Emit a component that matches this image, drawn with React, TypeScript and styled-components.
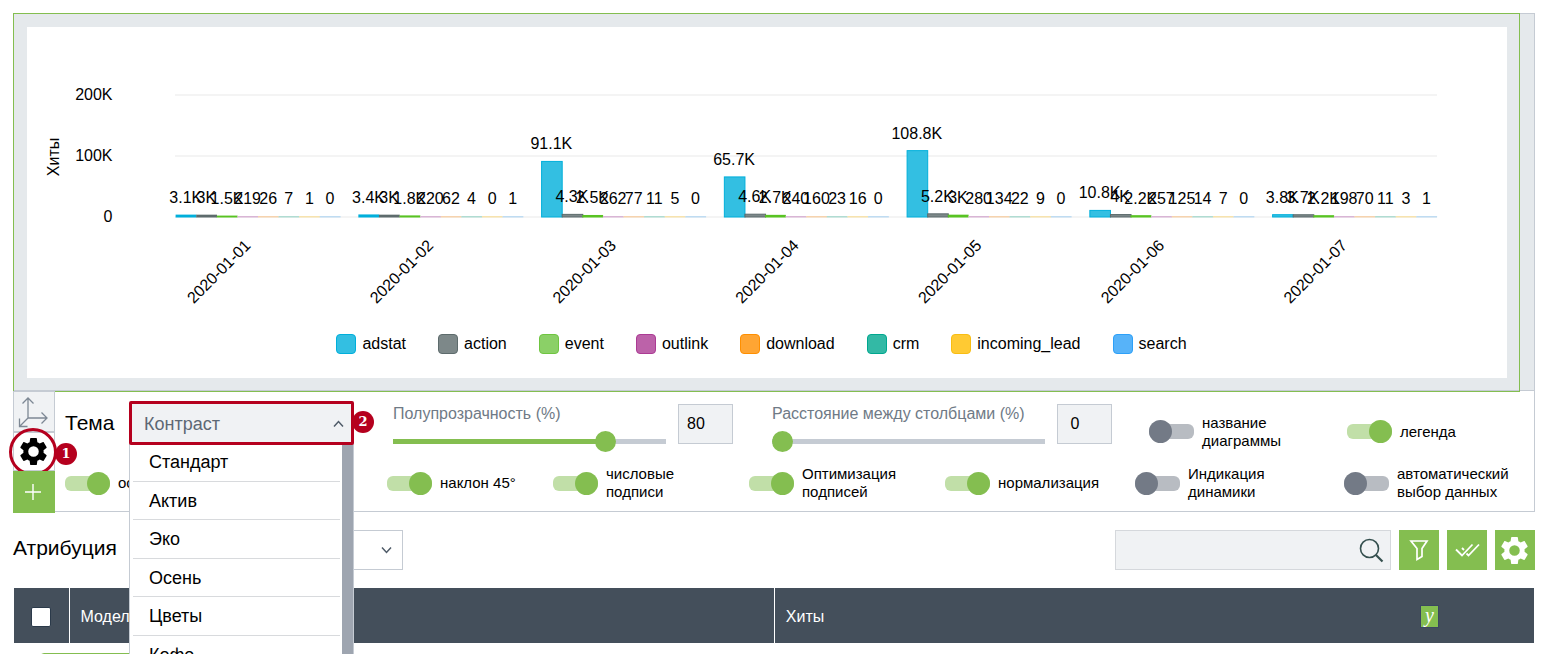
import React, { useState } from 'react';
import styled, { createGlobalStyle } from 'styled-components';

const green = '#84be50';
const line = '#c5cbd3';
const field = '#f0f2f4';
const red = '#b5001e';
const slate = '#444f5b';

const Global = createGlobalStyle`
  *, *::before, *::after { box-sizing: border-box; }
  body { margin: 0; background: #fff; color: #000; }
  body, button, input, select { font-family: "Liberation Sans", Arial, sans-serif; font-size: 16px; }
  button { cursor: pointer; }
`;

const Page = styled.main`
  height: 100vh;
  overflow: hidden;
  padding: 13px 12px 0 13px;
`;

/* Chart */
const ChartArea = styled.section`
  background: #e5e9ec;
  padding: 0 14px 0 0;
  border: solid ${line};
  border-width: 1px 1px 1px 0;
`;
const ChartFrame = styled.div`
  position: relative;
  margin: -1px 0 -2px;
  padding: 13px 12px 13px 13px;
  border: 1px solid ${green};
`;
const ChartCard = styled.div`
  background: #fff;
  padding-bottom: 24px;
`;
const Plot = styled.svg`
  display: block;
  width: 100%;
  height: auto;
  font-size: 16px;
`;
const Legend = styled.ul`
  display: flex;
  flex-wrap: wrap;
  justify-content: center;
  gap: 32px;
  margin: 0;
  padding: 0 11px 0 0;
  list-style: none;
`;
const LegendItem = styled.li`
  display: flex;
  gap: 6px;
  line-height: 20px;
`;
const Swatch = styled.span<{ $fill: string; $edge: string }>`
  width: 20px;
  height: 20px;
  border-radius: 4px;
  border: 1px solid ${(p) => p.$edge};
  background: ${(p) => p.$fill};
`;

/* Settings */
const Settings = styled.section`
  display: flex;
  height: 121px;
  border: solid ${line};
  border-width: 0 1px 1px 0;
`;
const SideTools = styled.div`
  display: flex;
  flex-direction: column;
  flex: none;
  width: 42px;
`;
const SideButton = styled.button<{ $kind: 'axes' | 'gear' | 'add' }>`
  display: grid;
  place-items: center;
  position: relative;
  flex: none;
  height: ${(p) => (p.$kind === 'axes' ? 41 : p.$kind === 'gear' ? 39 : 42)}px;
  padding: 0 2px 0 0;
  border: 1px solid ${(p) => (p.$kind === 'add' ? green : line)};
  background: ${(p) => (p.$kind === 'add' ? green : p.$kind === 'axes' ? field : '#fff')};
`;
const Ring = styled.span`
  position: absolute;
  left: -5px;
  top: -5px;
  width: 48px;
  height: 48px;
  border: 3px solid ${red};
  border-radius: 50%;
`;
const Marker = styled.span<{ $x: number; $y: number }>`
  position: absolute;
  left: ${(p) => p.$x}px;
  top: ${(p) => p.$y}px;
  z-index: 4;
  width: 22px;
  height: 22px;
  border-radius: 50%;
  background: ${red};
  color: #fff;
  font: bold 13px/22px "DejaVu Serif", serif;
  text-align: center;
`;
const Controls = styled.div`
  flex: 1;
  min-width: 0;
  padding-left: 10px;
`;
const MainRow = styled.div`
  display: grid;
  grid-template-columns: 64fr 264fr 379fr 377fr 198fr 187fr;
  padding-top: 10px;
  height: 71px;
`;
const SwitchRow = styled.div`
  display: grid;
  grid-template-columns: 322fr 166fr 196fr 196fr 190fr 209fr 190fr;
  align-items: center;
  height: 42px;
`;
const ThemeLabel = styled.label`
  font-size: 21px;
  line-height: 44px;
`;
const ThemePicker = styled.div`
  position: relative;
  width: 225px;
`;
const ThemeSelect = styled.select`
  appearance: none;
  display: block;
  position: relative;
  z-index: 3;
  width: 100%;
  height: 44px;
  padding: 2px 12px 0;
  border: 3px solid ${red};
  border-radius: 2px;
  background: ${field};
  color: #5d6874;
  font-size: 18px;
`;
const Caret = styled.svg<{ $right: number; $top: number }>`
  position: absolute;
  right: ${(p) => p.$right}px;
  top: ${(p) => p.$top}px;
  z-index: 4;
  pointer-events: none;
`;
const Menu = styled.div`
  display: flex;
  position: absolute;
  z-index: 2;
  top: 42px;
  left: 0;
  width: 100%;
  height: 231px;
  padding-left: 3px;
  border-left: 1px solid ${line};
  border-right: 1px solid ${line};
  background: #fff;
`;
const Options = styled.ul`
  display: flex;
  flex-direction: column;
  flex: 1;
  margin: 0 2px 0 0;
  padding: 0;
  list-style: none;
`;
const Option = styled.li`
  display: flex;
  align-items: center;
  flex: 1;
  padding: 2px 0 0 16px;
  border-bottom: 1px solid #d8dadd;
  font-size: 18px;
`;
const ScrollThumb = styled.div`
  width: 11px;
  background: #9ea5b0;
`;

const SliderGroup = styled.div`
  display: flex;
  gap: 12px;
  padding-top: 3px;
`;
const SliderField = styled.label`
  display: flex;
  flex-direction: column;
  gap: 7px;
  width: 273px;
  color: #6f7a86;
  line-height: 20px;
`;
const Range = styled.input`
  appearance: none;
  width: 100%;
  height: 21px;
  margin: 0;
  background: linear-gradient(${green}, ${green}) left center / var(--filled) 5px no-repeat,
    linear-gradient(${line}, ${line}) center / 100% 5px no-repeat;
  &::-webkit-slider-thumb {
    appearance: none;
    width: 21px;
    height: 21px;
    border-radius: 50%;
    background: ${green};
  }
`;
const NumberBox = styled.input`
  width: 55px;
  height: 40px;
  padding: 0 19px 0 0;
  border: 1px solid ${line};
  border-radius: 0;
  background: ${field};
  text-align: center;
`;
const SwitchLabel = styled.label`
  display: flex;
  align-items: center;
  gap: 8px;
  font-size: 15px;
  line-height: 18px;
  white-space: pre-line;
`;
const SwitchSlot = styled.div`
  display: flex;
  align-items: center;
  height: 61px;
`;
const SwitchInput = styled.input`
  appearance: none;
  display: grid;
  flex: none;
  align-items: center;
  width: 45px;
  height: 23px;
  margin: 0;
  &::before, &::after { content: ''; grid-area: 1 / 1; }
  &::before {
    height: 15px;
    border-radius: 6px;
    background: #b8bcc2;
  }
  &::after {
    width: 23px;
    height: 23px;
    border-radius: 50%;
    background: #737a86;
  }
  &:checked::before { background: #c1dfa8; }
  &:checked::after { background: ${green}; justify-self: end; }
`;

/* Table */
const Toolbar = styled.div`
  display: flex;
  align-items: center;
  gap: 8px;
  margin: 18px 0;
`;
const AttributionLabel = styled.label`
  width: 108px;
  font-size: 21px;
  line-height: 36px;
  padding-bottom: 4px;
`;
const AttributionPicker = styled.div`
  position: relative;
  width: 274px;
  margin-right: auto;
`;
const AttributionSelect = styled.select`
  appearance: none;
  display: block;
  width: 100%;
  height: 40px;
  border: 1px solid ${line};
  border-radius: 0;
  background: #fff;
`;
const SearchBox = styled.label`
  display: flex;
  align-items: center;
  width: 276px;
  height: 40px;
  padding-right: 6px;
  border: 1px solid #d5d8dc;
  background: ${field};
`;
const SearchInput = styled.input`
  flex: 1;
  min-width: 0;
  height: 100%;
  border: 0;
  background: none;
`;
const ToolButton = styled.button`
  display: grid;
  place-items: center;
  width: 40px;
  height: 40px;
  padding: 0 1px 0 0;
  border: 0;
  background: ${green};
`;
const Table = styled.table`
  width: calc(100% - 2px);
  margin: 0 1px;
  border-collapse: collapse;
  table-layout: fixed;
`;
const Head = styled.th<{ $width?: string }>`
  width: ${(p) => p.$width || 'auto'};
  height: 55px;
  padding: 2px 0 0 11px;
  background: ${slate};
  color: #fff;
  font-weight: normal;
  text-align: left;
  & + & { border-left: 1px solid #fff; }
`;
const HeadLine = styled.div`
  display: flex;
  align-items: center;
  justify-content: space-between;
  padding-right: 95px;
`;
const Check = styled.input`
  appearance: none;
  display: block;
  width: 20px;
  height: 20px;
  margin: 0 0 0 6px;
  border: 1px solid #2b3a4a;
  border-radius: 2px;
  background: #fff;
`;
const AxisTag = styled.button`
  width: 19px;
  height: 23px;
  padding: 0 0 4px;
  border: 1px solid #3b4660;
  background: ${green};
  color: #fff;
  font: italic 20px/16px "Liberation Serif", serif;
`;
const BodyCell = styled.td`
  padding: 10px 26px;
`;
const RowMark = styled.div`
  width: 240px;
  height: 40px;
  border: 1px solid ${green};
  border-radius: 4px;
`;

const series = [
  { name: 'adstat', fill: '#33bfe2', edge: '#00afdb' },
  { name: 'action', fill: '#7d8889', edge: '#5d6b6c' },
  { name: 'event', fill: '#8bd067', edge: '#6fc541' },
  { name: 'outlink', fill: '#bc62a9', edge: '#ab3b94' },
  { name: 'download', fill: '#ffa533', edge: '#ff8f00' },
  { name: 'crm', fill: '#33b9a5', edge: '#00a78f' },
  { name: 'incoming_lead', fill: '#ffca33', edge: '#f8bd13' },
  { name: 'search', fill: '#57b3f9', edge: '#2da0f8' },
];
const pale = ['#00afdb', '#5d6b6c', '#58c322', '#d9b5d5', '#f6d3ae', '#b0dcd2', '#f7e3ae', '#bfdcf2'];
const days = [
  { date: '2020-01-01', labels: ['3.1K', '3K', '1.5K', '219', '26', '7', '1', '0'] },
  { date: '2020-01-02', labels: ['3.4K', '3K', '1.8K', '220', '62', '4', '0', '1'] },
  { date: '2020-01-03', labels: ['91.1K', '4.3K', '2.5K', '262', '77', '11', '5', '0'] },
  { date: '2020-01-04', labels: ['65.7K', '4.6K', '2.7K', '240', '160', '23', '16', '0'] },
  { date: '2020-01-05', labels: ['108.8K', '5.2K', '3K', '280', '134', '22', '9', '0'] },
  { date: '2020-01-06', labels: ['10.8K', '4K', '2.2K', '257', '125', '14', '7', '0'] },
  { date: '2020-01-07', labels: ['3.8K', '3.7K', '2.2K', '198', '70', '11', '3', '1'] },
];
const valueOf = (s: string) => (s.endsWith('K') ? parseFloat(s) * 1000 : Number(s));

function Chart() {
  const base = 189.5;
  const unit = 61 / 100000;
  return (
    <Plot viewBox="0 0 1480 307" role="img" aria-label="Хиты">
      {[200, 100, 0].map((v) => (
        <g key={v}>
          <line x1="148" x2="1410" y1={base + 0.5 - v * 0.61} y2={base + 0.5 - v * 0.61} stroke="#f0f0f1" strokeWidth="1.5" />
          <text x="85.5" y={base + 5.5 - v * 0.61} textAnchor="end">{v ? `${v}K` : '0'}</text>
        </g>
      ))}
      <text transform="translate(32 130) rotate(-90)" textAnchor="middle">Хиты</text>
      {days.map((day, d) => {
        const left = 148.6 + d * 182.75;
        return (
          <g key={day.date}>
            {day.labels.map((label, i) => {
              const h = valueOf(label) * unit;
              const x = left + i * 20.6;
              return h > 2.2 ? (
                <rect key={i} x={x + 0.5} y={base - h + 0.5} width="20.6" height={h} fill={series[i].fill} stroke={series[i].edge} />
              ) : (
                <rect key={i} x={x} y={base - Math.max(h, 0.5)} width="20.8" height={Math.max(h, 0.5) + 1} fill={pale[i]} />
              );
            })}
            {day.labels.map((label, i) => {
              const h = valueOf(label) * unit;
              return (
                <text key={i} x={left + i * 20.6 + 10.2} y={base - h - (h > 0.8 ? 11.6 : 12.5)} textAnchor="middle">{label}</text>
              );
            })}
            <text transform={`translate(${left + 75.9} 219.5) rotate(-45)`} textAnchor="end">{day.date}</text>
          </g>
        );
      })}
    </Plot>
  );
}

function Gear({ size, color }: { size: number; color: string }) {
  return (
    <svg width={size} height={size} viewBox="2 2 20 20" fill={color} aria-hidden="true">
      <path d="M19.43 12.98c.04-.32.07-.64.07-.98s-.03-.66-.07-.98l2.11-1.65c.19-.15.24-.42.12-.64l-2-3.46c-.12-.22-.39-.3-.61-.22l-2.49 1c-.52-.4-1.08-.73-1.69-.98l-.38-2.65A.49.49 0 0 0 14 2h-4c-.25 0-.46.18-.49.42l-.38 2.65c-.61.25-1.17.59-1.69.98l-2.49-1c-.23-.09-.49 0-.61.22l-2 3.46c-.13.22-.07.49.12.64l2.11 1.65c-.04.32-.07.65-.07.98s.03.66.07.98l-2.11 1.65c-.19.15-.24.42-.12.64l2 3.46c.12.22.39.3.61.22l2.49-1c.52.4 1.08.73 1.69.98l.38 2.65c.03.24.24.42.49.42h4c.25 0 .46-.18.49-.42l.38-2.65c.61-.25 1.17-.59 1.69-.98l2.49 1c.23.09.49 0 .61-.22l2-3.46c.12-.22.07-.49-.12-.64l-2.11-1.65zM12 15.9a3.9 3.9 0 1 1 0-7.8 3.9 3.9 0 0 1 0 7.8z" />
    </svg>
  );
}

function Switch({ label, on = false }: { label: string; on?: boolean }) {
  const [checked, setChecked] = useState(on);
  return (
    <SwitchLabel>
      <SwitchInput type="checkbox" role="switch" checked={checked} onChange={(e) => setChecked(e.target.checked)} />
      {label}
    </SwitchLabel>
  );
}

function Slider({ label, initial }: { label: string; initial: number }) {
  const [value, setValue] = useState(initial);
  return (
    <SliderGroup>
      <SliderField>
        {label}
        <Range
          type="range"
          value={value}
          onChange={(e) => setValue(Number(e.target.value))}
          style={{ '--filled': `${value}%` } as React.CSSProperties}
        />
      </SliderField>
      <NumberBox aria-label={label} value={value} onChange={(e) => setValue(Number(e.target.value) || 0)} />
    </SliderGroup>
  );
}

const themes = ['Стандарт', 'Актив', 'Эко', 'Осень', 'Цветы', 'Кофе'];

export default function App() {
  return (
    <Page>
      <Global />
      <ChartArea>
        <ChartFrame>
          <ChartCard>
            <Chart />
            <Legend>
              {series.map((s) => (
                <LegendItem key={s.name}>
                  <Swatch $fill={s.fill} $edge={s.edge} />
                  {s.name}
                </LegendItem>
              ))}
            </Legend>
          </ChartCard>
        </ChartFrame>
      </ChartArea>

      <Settings>
        <SideTools>
          <SideButton $kind="axes" aria-label="Оси">
            <svg width="32" height="32" viewBox="0 0 32 32" fill="none" stroke="#7d8894" strokeWidth="1.3">
              <path d="M11 2v20h19M5.500 7.500L11 2l5.500 5.500M24.500 16.500L30 22l-5.500 5.500M11 22l-8.500 8.500M2.500 22.500v8h8" />
            </svg>
          </SideButton>
          <SideButton $kind="gear" aria-label="Настройки диаграммы">
            <Gear size={27} color="#000" />
            <Ring />
            <Marker $x={41} $y={10}>1</Marker>
          </SideButton>
          <SideButton $kind="add" aria-label="Добавить">
            <svg width="18" height="18" viewBox="0 0 18 18" stroke="#fff" strokeWidth="1.4">
              <path d="M9 1v16M1 9h16" />
            </svg>
          </SideButton>
        </SideTools>
        <Controls>
          <MainRow>
            <ThemeLabel htmlFor="theme">Тема</ThemeLabel>
            <ThemePicker>
              <ThemeSelect id="theme" defaultValue="Контраст">
                <option>Контраст</option>
              </ThemeSelect>
              <Caret $right={10} $top={19} width="11" height="8" viewBox="0 0 11 8" fill="none" stroke="#4f5b68" strokeWidth="1.500">
                <path d="M1 6.500l4.500-5 4.500 5" />
              </Caret>
              <Marker $x={223} $y={10}>2</Marker>
              <Menu>
                <Options role="listbox" aria-label="Тема">
                  {themes.map((t) => (
                    <Option key={t} role="option">{t}</Option>
                  ))}
                </Options>
                <ScrollThumb />
              </Menu>
            </ThemePicker>
            <Slider label="Полупрозрачность (%)" initial={80} />
            <Slider label="Расстояние между столбцами (%)" initial={0} />
            <SwitchSlot><Switch label={'название\nдиаграммы'} /></SwitchSlot>
            <SwitchSlot><Switch label="легенда" on /></SwitchSlot>
          </MainRow>
          <SwitchRow>
            <Switch label="оси" on />
            <Switch label="наклон 45°" on />
            <Switch label={'числовые\nподписи'} on />
            <Switch label={'Оптимизация\nподписей'} on />
            <Switch label="нормализация" on />
            <Switch label={'Индикация\nдинамики'} />
            <Switch label={'автоматический\nвыбор данных'} />
          </SwitchRow>
        </Controls>
      </Settings>

      <Toolbar>
        <AttributionLabel htmlFor="attribution">Атрибуция</AttributionLabel>
        <AttributionPicker>
          <AttributionSelect id="attribution" />
          <Caret $right={11} $top={16} width="11" height="8" viewBox="0 0 11 8" fill="none" stroke="#4f5b68" strokeWidth="1.500">
            <path d="M1 1.500l4.500 5 4.500-5" />
          </Caret>
        </AttributionPicker>
        <SearchBox>
          <SearchInput type="search" aria-label="Поиск" />
          <svg width="25" height="25" viewBox="0 0 25 25" fill="none" stroke="#35504f">
            <circle cx="10.500" cy="10.500" r="9" strokeWidth="1.600" />
            <path d="M17 17l6.500 6.500" strokeWidth="2.200" />
          </svg>
        </SearchBox>
        <ToolButton aria-label="Фильтр">
          <svg width="20" height="22" viewBox="0 0 20 22" fill="none" stroke="#fff" strokeWidth="1.700">
            <path d="M2 2h16l-5 7.500v8l-5 3v-11z" />
          </svg>
        </ToolButton>
        <ToolButton aria-label="Выбрать все">
          <svg width="26" height="16" viewBox="0 0 26 16" fill="none" stroke="#fff" strokeWidth="1.800">
            <path d="M2 7.500l6 6L18.500 2.500M8 6l2 2M12.500 11.500l2 2L25 2.500" />
          </svg>
        </ToolButton>
        <ToolButton aria-label="Настройки таблицы">
          <Gear size={27} color="#fff" />
        </ToolButton>
      </Toolbar>

      <Table>
        <thead>
          <tr>
            <Head $width="55px"><Check type="checkbox" aria-label="Выбрать все строки" /></Head>
            <Head $width="46.4%">Модель</Head>
            <Head>
              <HeadLine>
                Хиты
                <AxisTag aria-label="Ось Y">y</AxisTag>
              </HeadLine>
            </Head>
          </tr>
        </thead>
        <tbody>
          <tr>
            <BodyCell colSpan={3}><RowMark /></BodyCell>
          </tr>
        </tbody>
      </Table>
    </Page>
  );
}
